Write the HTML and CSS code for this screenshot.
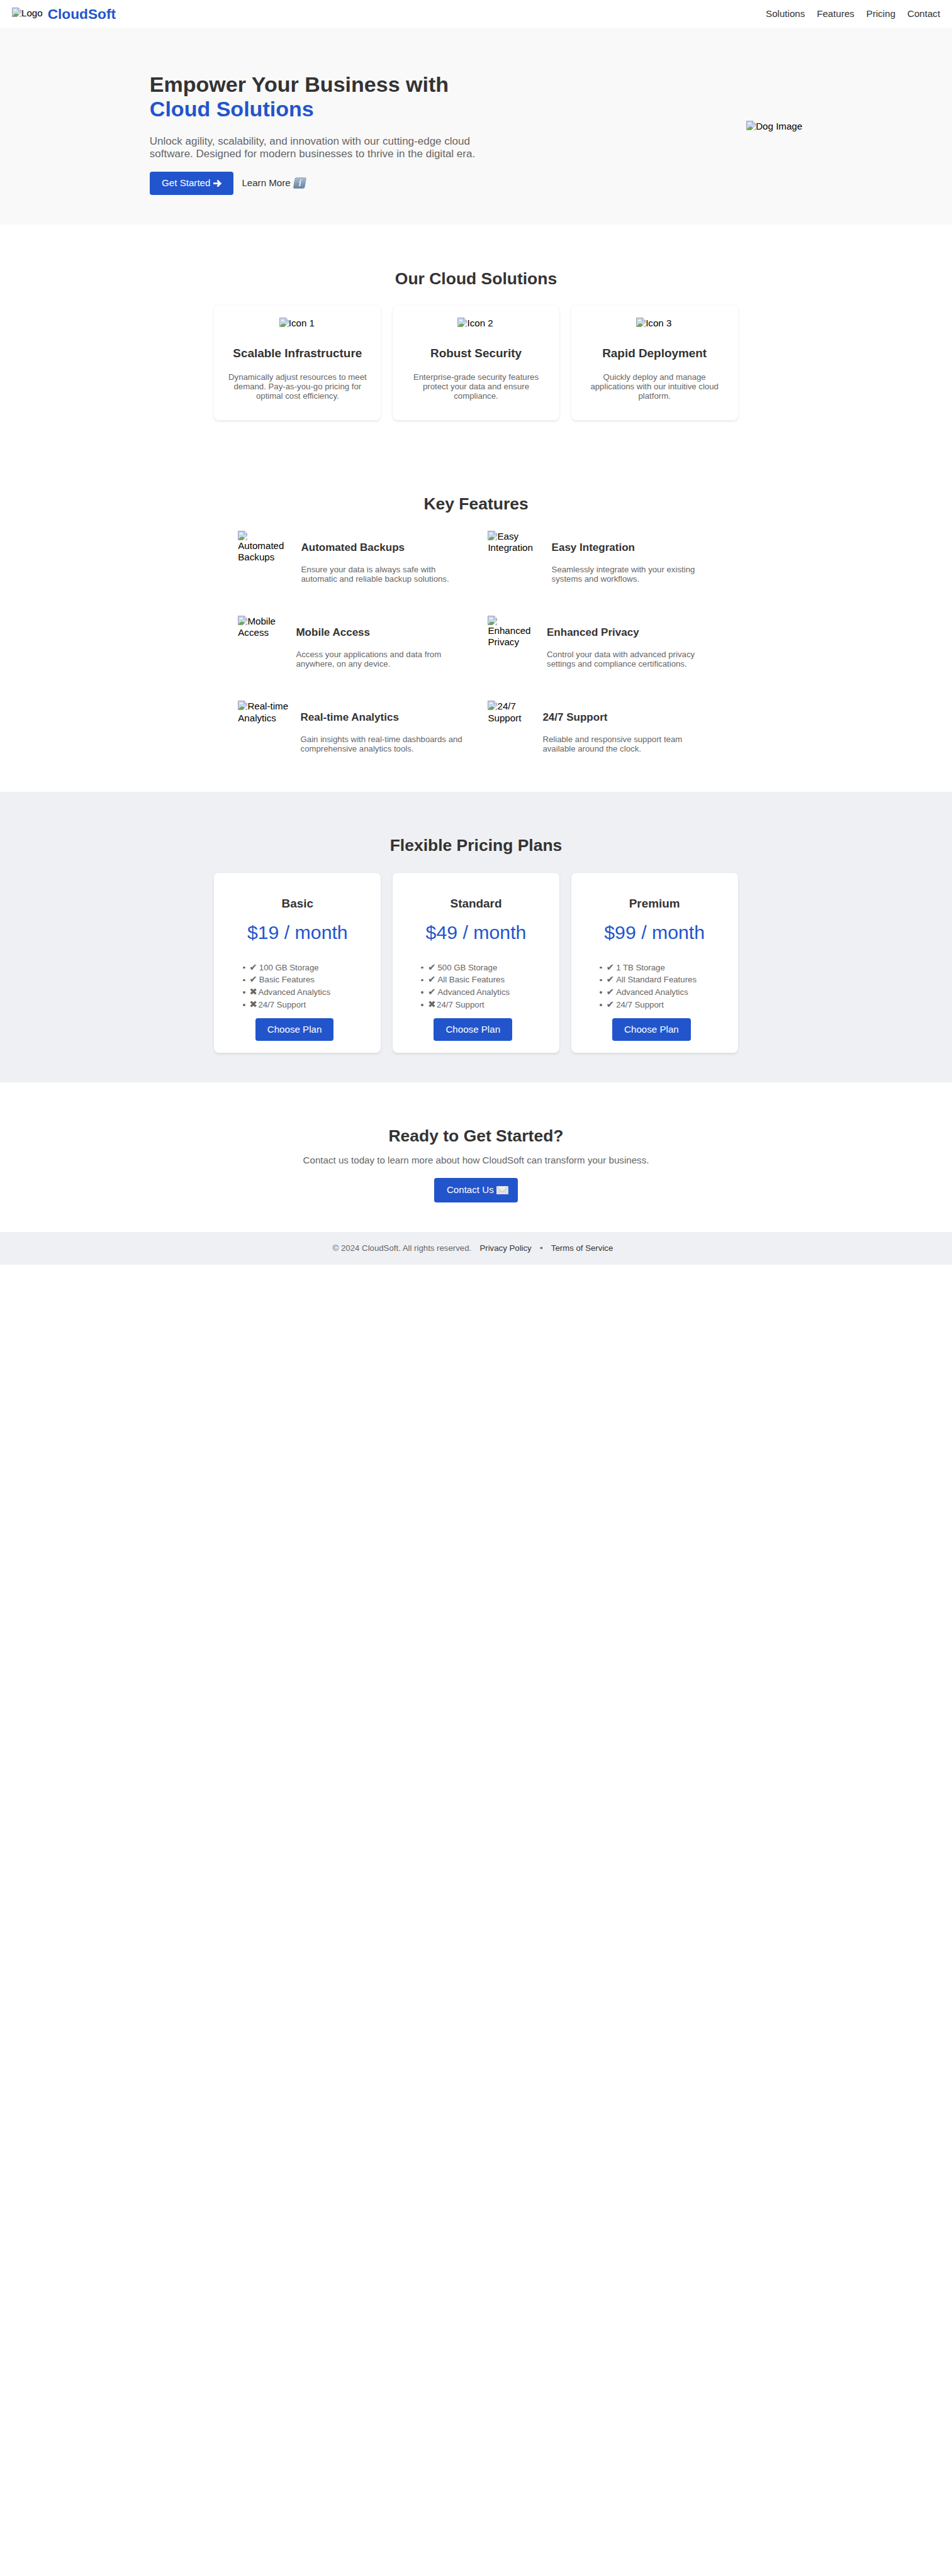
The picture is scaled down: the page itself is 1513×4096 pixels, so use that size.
FILE: index.html
```html
<!DOCTYPE html>
<html lang="en">
<head>
<meta charset="utf-8">
<title>CloudSoft</title>
<link rel="stylesheet" href="styles.css">
</head>
<body>
<svg class="defs" aria-hidden="true">
  <symbol id="pic" viewBox="0 0 16 16">
    <path d="M.5 15.5V.5h10.300l4.700 4.700v10.300z" fill="#c5d5f5"/>
    <path d="M3 5.500q.2-1.400 1.500-1.200 1.300-1.500 2.500 0 1.500-.1 1.500 1.200z" fill="#fff"/>
    <path d="M1 15.500q1.500-5 6-5.500 3 0 4.500 2.500l-3.500 3z" fill="#6bab45"/>
    <path d="M8.500 16 16 8.800v3.700L12.500 16z" fill="#fff"/>
    <path d="M10.800.5v4.700h4.700" fill="#fff" stroke="#999"/>
    <path d="M8.500 15.500h-8V.5h10.300l4.700 4.700v4M12.500 15.500h3v-3" fill="none" stroke="#999"/>
  </symbol>
</svg>
<header class="header">
  <div class="brand">
    <span class="alt"><svg class="pic"><use href="#pic"/></svg>Logo</span>
    <span class="brand-name">CloudSoft</span>
  </div>
  <nav class="nav"><a>Solutions</a><a>Features</a><a>Pricing</a><a>Contact</a></nav>
</header>

<section class="hero">
  <div class="hero-text">
    <h1>Empower Your Business with<br><span class="accent">Cloud Solutions</span></h1>
    <p>Unlock agility, scalability, and innovation with our cutting-edge cloud<br>software. Designed for modern businesses to thrive in the digital era.</p>
    <div class="actions">
      <a class="btn btn-start">Get Started <svg class="arrow" viewBox="0 0 14 12"><path d="M0 4.500h7.500L6 .8 8 0l6 6-6 6-2-.8 1.500-3.700H0z" fill="#fff"/></svg></a>
      <a class="learn">Learn More <svg class="info" viewBox="0 0 22 19"><defs><linearGradient id="ig" x2="0" y2="1"><stop stop-color="#a9bfd6"/><stop offset="1" stop-color="#66809d"/></linearGradient></defs><path d="M6 .4h13.500q2.400 0 2 2.300l-2.300 13.500q-.4 2.400-2.800 2.400H2.500q-2.400 0-2-2.300L2.900 2.800Q3.400.4 6 .4z" fill="url(#ig)" stroke="#6e87a2" stroke-width=".6"/><path d="M9.800 8h2.500l-1.500 5.800h1.400M9.600 13.800h1.200" fill="none" stroke="#fff" stroke-width="1.500"/><circle cx="12.800" cy="5" r="1.200" fill="#fff"/></svg></a>
    </div>
  </div>
  <span class="alt"><svg class="pic"><use href="#pic"/></svg>Dog Image</span>
</section>

<section class="solutions">
  <h2>Our Cloud Solutions</h2>
  <div class="cards">
    <article class="card"><span class="alt"><svg class="pic"><use href="#pic"/></svg>Icon 1</span><h3>Scalable Infrastructure</h3><p>Dynamically adjust resources to meet<br>demand. Pay-as-you-go pricing for<br>optimal cost efficiency.</p></article>
    <article class="card"><span class="alt"><svg class="pic"><use href="#pic"/></svg>Icon 2</span><h3>Robust Security</h3><p>Enterprise-grade security features<br>protect your data and ensure<br>compliance.</p></article>
    <article class="card"><span class="alt"><svg class="pic"><use href="#pic"/></svg>Icon 3</span><h3>Rapid Deployment</h3><p>Quickly deploy and manage<br>applications with our intuitive cloud<br>platform.</p></article>
  </div>
</section>

<section class="features">
  <h2>Key Features</h2>
  <div class="feature-grid">
    <div class="feature"><span class="alt stacked w-backups"><svg class="pic"><use href="#pic"/></svg>Automated<br>Backups</span><div><h4>Automated Backups</h4><p>Ensure your data is always safe with<br>automatic and reliable backup solutions.</p></div></div>
    <div class="feature"><span class="alt w-easy"><svg class="pic"><use href="#pic"/></svg>Easy<br>Integration</span><div><h4>Easy Integration</h4><p>Seamlessly integrate with your existing<br>systems and workflows.</p></div></div>
    <div class="feature"><span class="alt w-mobile"><svg class="pic"><use href="#pic"/></svg>Mobile<br>Access</span><div><h4>Mobile Access</h4><p>Access your applications and data from<br>anywhere, on any device.</p></div></div>
    <div class="feature"><span class="alt stacked w-privacy"><svg class="pic"><use href="#pic"/></svg>Enhanced<br>Privacy</span><div><h4>Enhanced Privacy</h4><p>Control your data with advanced privacy<br>settings and compliance certifications.</p></div></div>
    <div class="feature"><span class="alt w-realtime"><svg class="pic"><use href="#pic"/></svg>Real-time<br>Analytics</span><div><h4>Real-time Analytics</h4><p>Gain insights with real-time dashboards and<br>comprehensive analytics tools.</p></div></div>
    <div class="feature"><span class="alt w-support"><svg class="pic"><use href="#pic"/></svg>24/7<br>Support</span><div><h4>24/7 Support</h4><p>Reliable and responsive support team<br>available around the clock.</p></div></div>
  </div>
</section>

<section class="pricing">
  <h2>Flexible Pricing Plans</h2>
  <div class="cards">
    <article class="plan"><h3>Basic</h3><p class="price">$19 / month</p>
      <ul><li><i class="yes">✔</i>100 GB Storage</li><li><i class="yes">✔</i>Basic Features</li><li><i class="no">✖</i>Advanced Analytics</li><li><i class="no">✖</i>24/7 Support</li></ul>
      <a class="btn">Choose Plan</a></article>
    <article class="plan"><h3>Standard</h3><p class="price">$49 / month</p>
      <ul><li><i class="yes">✔</i>500 GB Storage</li><li><i class="yes">✔</i>All Basic Features</li><li><i class="yes">✔</i>Advanced Analytics</li><li><i class="no">✖</i>24/7 Support</li></ul>
      <a class="btn">Choose Plan</a></article>
    <article class="plan"><h3>Premium</h3><p class="price">$99 / month</p>
      <ul><li><i class="yes">✔</i>1 TB Storage</li><li><i class="yes">✔</i>All Standard Features</li><li><i class="yes">✔</i>Advanced Analytics</li><li><i class="yes">✔</i>24/7 Support</li></ul>
      <a class="btn">Choose Plan</a></article>
  </div>
</section>

<section class="cta">
  <h2>Ready to Get Started?</h2>
  <p>Contact us today to learn more about how CloudSoft can transform your business.</p>
  <a class="btn btn-contact">Contact Us <svg class="mail" viewBox="0 0 20 14"><rect width="20" height="14" rx=".6" fill="#e2e2e2"/><path d="M.5 13.500 7.500 7M19.500 13.500 12.500 7" stroke="#c8c8c8" stroke-width=".7"/><path d="M.5.5 8.800 9q1.200 1 2.400 0L19.500.5" fill="#ececec" stroke="#aaa" stroke-width=".8"/></svg></a>
</section>

<footer class="footer"><span>© 2024 CloudSoft. All rights reserved.</span><a>Privacy Policy</a><span>•</span><a>Terms of Service</a></footer>
</body>
</html>
```
FILE: styles.css
```css
/* The rem is the base unit: body copy is 1rem */
html { font-size: 15.13px; background: #fff; }
* { box-sizing: border-box; }
body { margin: 0; height: 4096px; overflow: hidden; font-family: "Liberation Sans", Arial, sans-serif; font-size: 1rem; line-height: 1.1875rem; color: #000; }
h1, h2, h3, h4, p, ul { margin: 0; }
h1, h2, h3, h4 { color: #333; font-weight: bold; }
p { color: #666; }
.defs { display: none; }

.alt { display: block; white-space: nowrap; flex: none; }
.pic { width: 1rem; height: 1rem; vertical-align: -0.0625rem; }
.stacked .pic { display: block; }

.btn { display: flex; align-items: center; justify-content: center; height: 2.40625rem; background: #2255cc; color: #fff; border-radius: 0.25rem; white-space: pre; }

.header { display: flex; justify-content: space-between; height: 2.9375rem; padding: 0 1.25rem; }
.brand { display: flex; }
.brand .alt { width: 3.75rem; padding-top: 0.78125rem; }
.brand-name { font-size: 1.5rem; font-weight: bold; line-height: 1.75rem; padding-top: 0.625rem; color: #2255cc; }
.nav { display: flex; gap: 1.25rem; padding-top: 0.875rem; color: #333; }

.hero { display: flex; align-items: center; justify-content: space-between; height: 20.6875rem; padding: 0 15.71875rem; background: #f9f9f9; }
.hero-text { padding-top: 1.5rem; }
.hero h1 { font-size: 2.25rem; line-height: 2.5625rem; }
.accent { color: #2255cc; }
.hero p { font-size: 1.125rem; line-height: 1.3125rem; margin-top: 1.5rem; white-space: nowrap; }
.actions { display: flex; align-items: center; gap: 0.875rem; margin-top: 1.21875rem; }
.btn-start { width: 8.8125rem; }
.arrow { width: 0.875rem; height: 0.75rem; }
.learn { display: flex; align-items: center; white-space: pre; color: #333; }
.info { width: 1.375rem; height: 1.1875rem; }

h2 { font-size: 1.75rem; line-height: 2rem; text-align: center; }
.cards { display: flex; justify-content: center; gap: 1.25rem; }
.card, .plan { width: 17.5rem; background: #fff; border-radius: 0.5rem; box-shadow: 0 0.125rem 0.25rem rgba(0, 0, 0, 0.1); text-align: center; }
h3 { font-size: 1.25rem; line-height: 1.4375rem; }

.solutions { height: 23.625rem; padding-top: 4.6875rem; }
.solutions .cards { margin-top: 1.78125rem; }
.card { height: 12.0625rem; padding-top: 1.28125rem; }
.card .alt { padding-right: 0.125rem; }
.card h3 { margin-top: 1.875rem; }
.card p { font-size: 0.875rem; line-height: 1rem; margin-top: 1.21875rem; }

.features { height: 35.975rem; padding-top: 4.6875rem; }
.feature-grid { display: grid; grid-template-columns: 26.25rem 26.25rem; grid-auto-rows: 8.9375rem; justify-content: start; padding-left: 25rem; margin-top: 1.84375rem; }
.feature { display: flex; gap: 1.25rem; }
.feature h4 { font-size: 1.125rem; line-height: 1.3125rem; margin-top: 1.125rem; }
.feature p { font-size: 0.875rem; line-height: 1rem; margin-top: 1.125rem; white-space: nowrap; }
.w-backups { width: 5.375rem; }
.w-easy { width: 5.4375rem; }
.w-mobile { width: 4.84375rem; }
.w-privacy { width: 4.9375rem; }
.w-realtime { width: 5.3125rem; }
.w-support { width: 4.5rem; }

.pricing { height: 30.525rem; padding-top: 4.625rem; background: #eff0f4; }
.pricing .cards { margin-top: 1.875rem; }
.plan { height: 18.9375rem; padding-top: 2.5rem; }
.price { font-size: 2rem; line-height: 2.25rem; margin-top: 1.265625rem; color: #2255cc; }
.plan ul { list-style: none; padding: 0 0 0 3rem; margin-top: 1.859375rem; text-align: left; font-size: 0.875rem; line-height: 1.3125rem; color: #666; }
.plan li { display: flex; align-items: center; height: 1.3125rem; white-space: nowrap; }
.plan li::before { content: ""; width: 0.25rem; height: 0.25rem; border-radius: 50%; background: #666; margin-right: 0.4375rem; }
.plan i { font-style: normal; font-family: "DejaVu Sans", sans-serif; font-size: 1rem; }
.yes { width: 1.03125rem; }
.no { width: 0.9375rem; }
.plan .btn { width: 8.25rem; margin: 0.703125rem 0 0 4.3125rem; }

.cta { height: 15.7rem; padding-top: 4.625rem; text-align: center; }
.cta p { margin-top: 0.96875rem; }
.btn-contact { width: 8.75rem; height: 2.5625rem; margin: 1.25rem auto 0; padding-left: 0.3125rem; }
.mail { width: 1.25rem; height: 0.875rem; }

.footer { display: flex; justify-content: flex-start; align-items: center; height: 3.5rem; padding-left: 34.9375rem; gap: 0.875rem; background: #eff0f4; font-size: 0.875rem; color: #666; white-space: nowrap; }
.footer a { color: #333; }
```
